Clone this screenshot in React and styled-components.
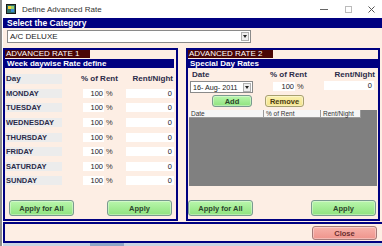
import React from "react";
import styled, { createGlobalStyle } from "styled-components";

const NAVY = "#000080";
const PEACH = "#fdeee4";
const INK = "#2b2b48";

const GlobalStyle = createGlobalStyle`
  html, body {
    margin: 0;
    padding: 0;
    background: #fff;
  }
  body {
    font-family: "Liberation Sans", Arial, sans-serif;
  }
  * {
    box-sizing: border-box;
  }
`;

const StWindow = styled.div`
  width: 382px;
  height: 246px;
  overflow: hidden;
  background: #fff;
  display: flex;
  flex-direction: column;
  border-left: 2px solid #8c8c8c;
`;

const StTitleBar = styled.div`
  height: 18px;
  display: flex;
  align-items: center;
  padding-left: 4px;
  background: #fff;
`;

const StTitle = styled.span`
  margin-left: 6px;
  font-size: 8px;
  color: #333;
`;

const StWinControls = styled.div`
  margin-left: auto;
  display: flex;
  height: 100%;
`;

const StWinButton = styled.div`
  width: ${(props) => props.$w}px;
  height: 100%;
  display: flex;
  align-items: center;
  justify-content: center;
`;

const StBody = styled.div`
  flex: 1;
  display: flex;
  flex-direction: column;
  padding-left: 1px;
`;

const StSectionBar = styled.div`
  height: 10px;
  background: ${NAVY};
  color: #fff;
  font-weight: bold;
  font-size: 8.5px;
  line-height: 10px;
  padding-left: 4px;
`;

const StCategoryRow = styled.div`
  height: 20px;
  background: ${PEACH};
  padding: 2px 0 0 4px;
`;

const StCombo = styled.div`
  width: ${(props) => props.$w}px;
  height: ${(props) => props.$h}px;
  margin-left: ${(props) => props.$ml || 0}px;
  background: #fff;
  border: 1px solid #8a8a8a;
  display: flex;
  align-items: center;
  font-size: ${(props) => props.$fs || 8}px;
  color: #222;
  padding-left: 2px;
  white-space: nowrap;
  overflow: hidden;
`;

const StComboArrow = styled.div`
  margin-left: auto;
  margin-right: 1px;
  flex-shrink: 0;
  width: 8px;
  height: 9px;
  background: #eeeeee;
  border: 1px solid #b0b0b0;
  display: flex;
  align-items: center;
  justify-content: center;

  &::after {
    content: "";
    border-left: 2px solid transparent;
    border-right: 2px solid transparent;
    border-top: 3px solid #222;
  }
`;

const StPanels = styled.div`
  height: 174px;
  background: ${PEACH};
  display: flex;
  gap: 8px;
  padding-bottom: 1px;
`;

const StPanel = styled.div`
  width: ${(props) => props.$w}px;
  border: 2px solid ${NAVY};
  background: ${PEACH};
  display: flex;
  flex-direction: column;
  padding-bottom: 3px;
`;

const StTag = styled.div`
  width: 85px;
  height: 8px;
  background: #4a0606;
  color: #fff;
  font-size: 8px;
  line-height: 8px;
  padding-left: 1px;
  white-space: nowrap;
  overflow: hidden;
`;

const StPanelBar = styled.div`
  margin-top: 1px;
  margin-right: ${(props) => props.$mr || 0}px;
  height: 9px;
  background: ${NAVY};
  color: #fff;
  font-weight: bold;
  font-size: 8px;
  line-height: 9px;
  padding-left: 2px;
  white-space: nowrap;
`;

const StWeekTable = styled.div`
  margin-top: 3.5px;
  display: flex;
  flex-direction: column;
`;

const StWeekRow = styled.div`
  height: 14.6px;
  display: grid;
  grid-template-columns: 57px 21px 21px 22px 48px;
  align-items: center;
`;

const StDayCell = styled.div`
  height: ${(props) => (props.$head ? 10 : 9)}px;
  background: #ececec;
  color: ${INK};
  font-weight: bold;
  font-size: ${(props) => (props.$head ? 8 : 7.5)}px;
  line-height: ${(props) => (props.$head ? 10 : 9)}px;
  padding-left: 1px;
`;

const StHeadText = styled.div`
  grid-column: ${(props) => props.$col};
  color: ${INK};
  font-weight: bold;
  font-size: 8px;
  padding-left: ${(props) => props.$pl || 0}px;
  padding-right: ${(props) => props.$pr || 0}px;
  text-align: ${(props) => props.$align || "left"};
  white-space: nowrap;
`;

const StValueBox = styled.div`
  grid-column: ${(props) => props.$col || "auto"};
  width: ${(props) => (props.$w ? `${props.$w}px` : "auto")};
  height: 9px;
  margin-left: ${(props) => props.$ml || 0}px;
  margin-top: ${(props) => props.$mt || 0}px;
  background: #fff;
  font-size: 7.5px;
  line-height: 9px;
  color: #222;
  text-align: right;
  padding-right: ${(props) => props.$pr || 1}px;
`;

const StPctSign = styled.div`
  width: ${(props) => (props.$w ? `${props.$w}px` : "auto")};
  font-size: 7.5px;
  line-height: 9px;
  color: #333;
  padding-left: 2px;
  margin-top: ${(props) => props.$mt || 0}px;
`;

const StButtonRow = styled.div`
  margin-top: auto;
  display: flex;
  justify-content: space-between;
  padding-left: ${(props) => props.$pl || 0}px;
  padding-right: ${(props) => props.$pr || 0}px;
`;

const TONES = {
  green: { bg: "linear-gradient(#b9f6ac, #8fe37f)", border: "#7a9a90", color: "#2c462c" },
  yellow: { bg: "linear-gradient(#fbf1ae, #f3e38c)", border: "#a8a070", color: "#4a3a10" },
  red: { bg: "linear-gradient(#f7b2aa, #ef948c)", border: "#a47a78", color: "#6a2c2c" },
};

const StButton = styled.button`
  width: ${(props) => props.$w}px;
  height: ${(props) => props.$h}px;
  margin-left: ${(props) => props.$ml || 0}px;
  padding: 0;
  border: 1px solid ${(props) => TONES[props.$tone].border};
  border-radius: 3px;
  background: ${(props) => TONES[props.$tone].bg};
  color: ${(props) => TONES[props.$tone].color};
  font-family: "Liberation Sans", Arial, sans-serif;
  font-weight: bold;
  font-size: 7.5px;
  box-shadow: inset 0 0 0 1px rgba(255, 255, 255, 0.35);
`;

const StLabelsRow = styled.div`
  margin-top: 1px;
  height: 10px;
  display: grid;
  grid-template-columns: 82px 50px 1fr;
  align-items: center;
`;

const StFieldRow = styled.div`
  margin-top: ${(props) => props.$mt || 0}px;
  height: 12px;
  display: flex;
  align-items: flex-start;
`;

const StGrid = styled.div`
  margin: 3px 1px 0 1px;
  height: 76px;
  background: #808080;
  display: flex;
  flex-direction: column;
`;

const StGridHead = styled.div`
  display: flex;
  height: 8px;
`;

const StGridHeadCell = styled.div`
  width: ${(props) => props.$w}px;
  height: 8px;
  background: #f6f6f6;
  border-right: 1px solid #9a9a9a;
  border-bottom: 1px solid #9a9a9a;
  font-size: 6.5px;
  line-height: 7px;
  color: #333;
  padding-left: 2px;
`;

const StFooter = styled.div`
  height: 21px;
  background: ${PEACH};
  border-top: 2px solid ${NAVY};
  border-bottom: 2px solid ${NAVY};
  border-left: 2px solid ${NAVY};
  display: flex;
  justify-content: flex-end;
  align-items: center;
  padding-right: 5px;
  padding-top: 1px;
`;

const StTaskStrip = styled.div`
  height: 3px;
  background: linear-gradient(90deg, #c9d4e2 0 23%, #8ea6c8 23% 32%, #c9d4e2 32%);
`;

const DAYS = ["MONDAY", "TUESDAY", "WEDNESDAY", "THURSDAY", "FRIDAY", "SATURDAY", "SUNDAY"];

function AppIcon() {
  return (
    <svg width="10" height="10" viewBox="0 0 10 10">
      <rect x="0.5" y="0.5" width="9" height="9" fill="#2f6f6a" stroke="#1a1a1a" />
      <rect x="2" y="2" width="3" height="3" fill="#f2d23a" />
      <rect x="5" y="5" width="3" height="3" fill="#3a8ad0" />
      <rect x="5" y="2" width="3" height="3" fill="#9ad06a" />
    </svg>
  );
}

function App() {
  return (
    <>
      <GlobalStyle />
      <StWindow>
        <StTitleBar>
          <AppIcon />
          <StTitle>Define Advanced Rate</StTitle>
          <StWinControls>
            <StWinButton $w={25}>
              <svg width="8" height="8" viewBox="0 0 8 8">
                <line x1="0" y1="4.5" x2="8" y2="4.5" stroke="#666" strokeWidth="1" />
              </svg>
            </StWinButton>
            <StWinButton $w={25}>
              <svg width="7" height="7" viewBox="0 0 7 7">
                <rect x="0.5" y="0.5" width="6" height="6" fill="none" stroke="#bbb" strokeWidth="1" />
              </svg>
            </StWinButton>
            <StWinButton $w={21}>
              <svg width="7" height="7" viewBox="0 0 7 7">
                <path d="M0.5 0.5 L6.5 6.5 M6.5 0.5 L0.5 6.5" stroke="#555" strokeWidth="1" />
              </svg>
            </StWinButton>
          </StWinControls>
        </StTitleBar>

        <StBody>
          <StSectionBar>Select the Category</StSectionBar>
          <StCategoryRow>
            <StCombo $w={244} $h={13}>
              A/C DELUXE
              <StComboArrow />
            </StCombo>
          </StCategoryRow>

          <StPanels>
            <StPanel $w={175}>
              <StTag>ADVANCED RATE 1</StTag>
              <StPanelBar $mr={2}>Week daywise Rate define</StPanelBar>
              <StWeekTable>
                <StWeekRow>
                  <StDayCell $head>Day</StDayCell>
                  <StHeadText $col="2 / 5" $pl={19}>% of Rent</StHeadText>
                  <StHeadText $col="5" $align="right" $pr={1}>Rent/Night</StHeadText>
                </StWeekRow>
                {DAYS.map((day) => (
                  <StWeekRow key={day}>
                    <StDayCell>{day}</StDayCell>
                    <StValueBox $col="3">100</StValueBox>
                    <StPctSign>%</StPctSign>
                    <StValueBox $pr={2}>0</StValueBox>
                  </StWeekRow>
                ))}
              </StWeekTable>
              <StButtonRow $pl={4} $pr={4}>
                <StButton $tone="green" $w={65} $h={16}>Apply for All</StButton>
                <StButton $tone="green" $w={65} $h={16}>Apply</StButton>
              </StButtonRow>
            </StPanel>

            <StPanel $w={194}>
              <StTag>ADVANCED RATE 2</StTag>
              <StPanelBar>Special Day Rates</StPanelBar>
              <StLabelsRow>
                <StHeadText $pl={4}>Date</StHeadText>
                <StHeadText>% of Rent</StHeadText>
                <StHeadText $align="right" $pr={3}>Rent/Night</StHeadText>
              </StLabelsRow>
              <StFieldRow $mt={2}>
                <StCombo $w={63} $h={12} $ml={2} $fs={7.2}>
                  16- Aug- 2011
                  <StComboArrow />
                </StCombo>
                <StValueBox $w={22} $ml={20} $mt={1}>100</StValueBox>
                <StPctSign $w={29} $mt={1}>%</StPctSign>
                <StValueBox $w={50} $pr={2}>0</StValueBox>
              </StFieldRow>
              <StFieldRow $mt={2}>
                <StButton $tone="green" $w={40} $h={12} $ml={24}>Add</StButton>
                <StButton $tone="yellow" $w={39} $h={12} $ml={13}>Remove</StButton>
              </StFieldRow>
              <StGrid>
                <StGridHead>
                  <StGridHeadCell $w={75}>Date</StGridHeadCell>
                  <StGridHeadCell $w={57}>% of Rent</StGridHeadCell>
                  <StGridHeadCell $w={40}>Rent/Night</StGridHeadCell>
                </StGridHead>
              </StGrid>
              <StButtonRow $pr={2}>
                <StButton $tone="green" $w={65} $h={16}>Apply for All</StButton>
                <StButton $tone="green" $w={65} $h={16}>Apply</StButton>
              </StButtonRow>
            </StPanel>
          </StPanels>

          <StFooter>
            <StButton $tone="red" $w={65} $h={14}>Close</StButton>
          </StFooter>
          <StTaskStrip />
        </StBody>
      </StWindow>
    </>
  );
}

export default App;
